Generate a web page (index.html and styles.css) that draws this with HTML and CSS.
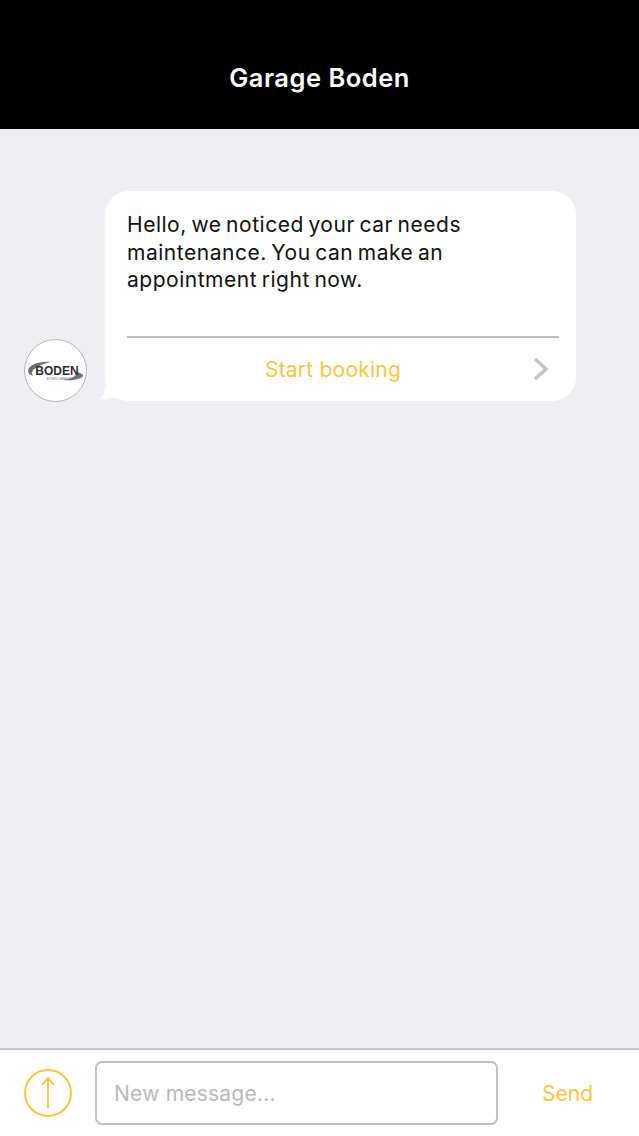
FILE: index.html
```html
<!DOCTYPE html>
<html lang="en">
<head>
  <meta charset="UTF-8">
  <title>Garage Boden</title>
  <link rel="stylesheet" href="styles.css">
</head>
<body>

  <!-- Top bar -->
  <header class="topbar">
    <h1>Garage Boden</h1>
  </header>

  <!-- Messages -->
  <main class="chat">
    <div class="row">
      <div class="avatar">
        <svg class="swoosh" width="61" height="61" viewBox="0 0 61 61">
          <path d="M26 22C14 21 3 25 3 31C3 33 5 35 8 36C6 33 7 30 11 28C15 25 20 23 26 22Z" fill="#6e6e72"/>
          <path d="M38 40C46 39 51 37 52 32C56 33 59 35 58 36C56 39 48 41 38 40Z" fill="#6e6e72"/>
        </svg>
        <span class="logo-name">BODEN</span>
        <span class="logo-sub">BODEN GARAGE AG</span>
      </div>
      <div class="bubble">
        <svg class="tail" width="20" height="14" viewBox="0 0 20 14">
          <path d="M20 0V12C14 11 10 10 8 12C6 13 3 12 0 12C4 10 6 6 6 0Z" fill="#fff"/>
        </svg>
        <p class="bubble-text">Hello, we noticed your car needs maintenance. You can make an appointment right now.</p>
        <div class="action">
          <span class="action-label">Start booking</span>
          <svg class="chevron" width="16" height="24" viewBox="0 0 16 24">
            <path d="M2 2L13 12L2 22" fill="none" stroke="#c4c4c6" stroke-width="3.5"/>
          </svg>
        </div>
      </div>
    </div>
  </main>

  <!-- Message input -->
  <footer class="composer">
    <button class="upload">
      <svg width="48" height="48" viewBox="0 0 48 48">
        <circle cx="24" cy="24" r="23" fill="none" stroke="#fdc543" stroke-width="2"/>
        <path d="M24 39V9M18 16L24 9L30 16" fill="none" stroke="#fdc543" stroke-width="1.8"/>
      </svg>
    </button>
    <div class="input">New message...</div>
    <span class="send">Send</span>
  </footer>

</body>
</html>
```

FILE: styles.css
```css
/* Base */
html, body {
  height: 100%;
}

body {
  margin: 0;
  height: 1136px;
  display: flex;
  flex-direction: column;
  overflow: hidden;
  font-family: Inter, "Liberation Sans", sans-serif;
  letter-spacing: 0.22px;
  background-color: #efeef2;
}

/* Top bar */
.topbar {
  height: 129px;
  flex: none;
  display: flex;
  align-items: center;
  justify-content: center;
  padding-top: 25px;
  box-sizing: border-box;
  background-color: #000;
}

.topbar h1 {
  margin: 0;
  font-size: 25.5px;
  font-weight: 600;
  letter-spacing: 0.5px;
  color: #fff;
}

/* Messages */
.chat {
  flex: 1;
  padding: 62px 63px 0 24px;
}

.row {
  display: flex;
  align-items: flex-end;
  gap: 18px;
}

.avatar {
  position: relative;
  width: 63px;
  height: 63px;
  flex: none;
  margin-bottom: -1px;
  box-sizing: border-box;
  display: flex;
  flex-direction: column;
  align-items: center;
  justify-content: center;
  border: 1px solid #b4b4b8;
  border-radius: 50%;
  background-color: #fff;
  font-family: "Liberation Sans", sans-serif;
  letter-spacing: 0;
}

.swoosh {
  position: absolute;
  left: 0;
  top: 0;
}

.logo-name {
  position: relative;
  margin: 5px 0 0 3px;
  font-size: 12px;
  font-weight: 700;
  line-height: 12px;
  color: #303034;
}

.logo-sub {
  position: relative;
  margin-left: 12px;
  font-size: 3px;
  line-height: 4px;
  color: #77777b;
}

.bubble {
  position: relative;
  flex: 1;
  height: 210px;
  box-sizing: border-box;
  padding: 20px 17px 0 22px;
  border-radius: 24px;
  background-color: #fff;
}

.tail {
  position: absolute;
  left: -6px;
  bottom: 0;
}

.bubble-text {
  margin: 0;
  height: 127px;
  box-sizing: border-box;
  font-size: 21px;
  line-height: 27.5px;
  letter-spacing: 0.52px;
  word-spacing: -1.8px;
  color: #111;
  border-bottom: 2px solid #bdbdbf;
}

.action {
  display: flex;
  align-items: center;
  height: 62px;
}

.action-label {
  flex: 1;
  padding-left: 6px;
  text-align: center;
  font-size: 21px;
  color: #fdc543;
}

.chevron {
  flex: none;
  margin-right: 10px;
}

/* Message input */
.composer {
  height: 88px;
  flex: none;
  display: flex;
  align-items: center;
  box-sizing: border-box;
  padding: 0 46px 0 24px;
  border-top: 2px solid #c8c8ca;
  background-color: #fff;
}

.upload {
  width: 48px;
  height: 48px;
  flex: none;
  padding: 0;
  border: 0;
  background: none;
}

.input {
  flex: 1;
  height: 64px;
  margin: 0 44px 0 23px;
  padding-left: 17px;
  box-sizing: border-box;
  display: flex;
  align-items: center;
  border: 2px solid #bfbfc3;
  border-radius: 7px;
  font-size: 21px;
  color: #b9b9bd;
}

.send {
  font-size: 21px;
  letter-spacing: 0;
  color: #fdc543;
}
```
